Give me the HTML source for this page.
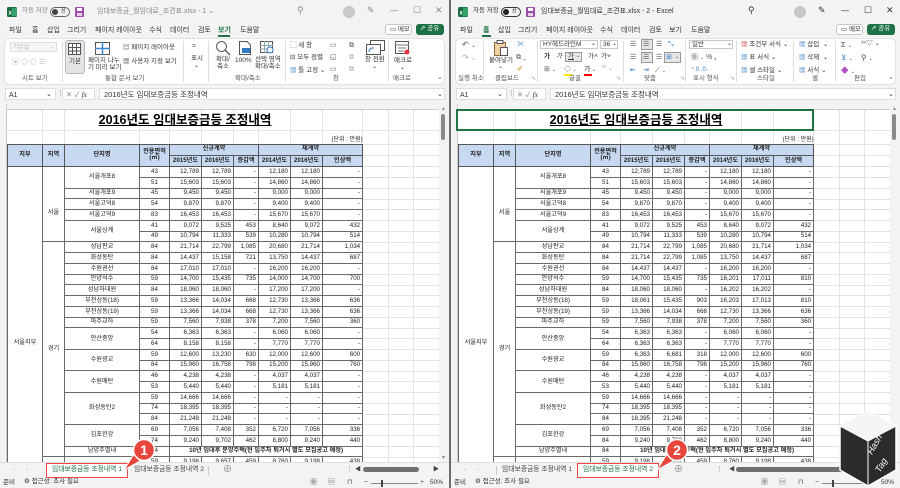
<!DOCTYPE html>
<html><head><meta charset="utf-8">
<style>
*{box-sizing:border-box}
body{margin:0;width:900px;height:488px;position:relative;overflow:hidden;background:#6b6b6b;font-family:"Liberation Sans","Noto Sans CJK KR",sans-serif}
.win{position:absolute;top:0;width:449px;height:488px;background:#f3f3f3;overflow:hidden}
.t{position:absolute;white-space:nowrap;font-size:7px;color:#333;line-height:1}
.g{color:#888}
.lab{position:absolute;white-space:nowrap;font-size:6.5px;color:#555;line-height:1;top:76px}
.sep{position:absolute;top:41px;width:1px;height:41px;background:#dedede}
.rib{position:absolute;left:4px;top:38px;width:441px;height:47px;background:#fff;border:1px solid #e2e2e2;border-radius:6px}
.box{position:absolute;border:1px solid #c8c8c8;background:#fff}
.sheet{position:absolute;left:0;top:104px;width:439px;height:359px;background:#fff;overflow:hidden}
table{position:absolute;left:7px;top:6px;border-collapse:collapse;table-layout:fixed;width:355px}
td,th{padding:0;font-size:6.2px;line-height:1;overflow:hidden;white-space:nowrap;color:#222}
.d td{border:1px solid #6a6a6a;background:#fff;text-align:right;padding-right:2px}
.d td.c{text-align:center;padding:0}
.h th{border:1px solid #555;background:#c6d9f1;font-weight:bold;font-size:6.2px}
.title{text-align:center;font-size:12.5px;font-weight:bold;text-decoration:underline;color:#000;vertical-align:middle}
.unit{text-align:right;font-size:6px;vertical-align:bottom;padding-bottom:1px!important}
.d{height:10.75px}
.vs{position:absolute;left:439px;top:104px;width:9px;height:359px;background:#f3f3f3}
.tabs{position:absolute;left:0;top:462px;width:449px;height:16px;background:#f3f3f3;border-top:1px solid #ddd}
.stat{position:absolute;left:0;top:478px;width:449px;height:10px;background:#f3f3f3}
</style></head><body>

<!-- LEFT WINDOW -->
<div class="win" style="left:0">
  <svg style="position:absolute;left:7px;top:7px" width="10" height="10"><rect width="10" height="10" rx="1.5" fill="#1d6f42"/><rect x="5" y="1" width="5" height="8" fill="#33a36b"/><text x="1.5" y="7.5" font-size="6" fill="#fff" font-family="Liberation Sans" font-weight="bold">x</text></svg>
  <span class="t g" style="left:22px;top:8px;font-size:6.5px">자동 저장</span>
  <div style="position:absolute;left:50px;top:7px;width:20px;height:10px;border:1px solid #666;border-radius:5px"><div style="position:absolute;left:1px;top:1px;width:6px;height:6px;border-radius:3px;background:#444"></div><span class="t" style="left:10px;top:1px;font-size:5px">끔</span></div>
  <svg style="position:absolute;left:75px;top:7px" width="9" height="10"><rect width="9" height="10" rx="1" fill="#9b4fa8"/><rect x="2" y="1" width="5" height="3" fill="#fff"/><rect x="2" y="6" width="5" height="3" fill="#e8cde9"/></svg>
  <span class="t g" style="left:97px;top:8px">임대보증금_월임대료_조견표.xlsx - 1 ⌄</span>
  <span class="t g" style="left:297px;top:6px;font-size:9px">⚲</span>
  <div style="position:absolute;left:343px;top:6px;width:12px;height:12px;border-radius:6px;background:#c8c8c8"></div>
  <span class="t g" style="left:367px;top:6px;font-size:9px">✎</span>
  <span class="t g" style="left:390px;top:7px;font-size:8px">—</span>
  <span class="t g" style="left:413px;top:6px;font-size:9px">☐</span>
  <span class="t g" style="left:435px;top:6px;font-size:9px">✕</span>

  <span class="t" style="left:9px;top:27px">파일</span><span class="t" style="left:32px;top:27px">홈</span><span class="t" style="left:47px;top:27px">삽입</span><span class="t" style="left:67px;top:27px">그리기</span><span class="t" style="left:95px;top:27px">페이지 레이아웃</span><span class="t" style="left:149px;top:27px">수식</span><span class="t" style="left:170px;top:27px">데이터</span><span class="t" style="left:198px;top:27px">검토</span><span class="t" style="left:218px;top:27px;color:#1e7145;font-weight:bold">보기</span><span class="t" style="left:240px;top:27px">도움말</span>
  <div style="position:absolute;left:218px;top:35px;width:12px;height:2px;background:#1e7145"></div>
  <div class="box" style="left:385px;top:24px;width:27px;height:11px;border-radius:3px"><span class="t" style="left:4px;top:2px;font-size:6.5px">▭ 메모</span></div>
  <div style="position:absolute;left:416px;top:24px;width:28px;height:11px;border-radius:3px;background:#1e7145"><span class="t" style="left:4px;top:2px;font-size:6.5px;color:#fff">⇗ 공유</span></div>

  <div class="rib"></div>
  <div class="box" style="left:10px;top:42px;width:47px;height:10px;background:#f6f6f6;border-color:#e0e0e0"><span class="t" style="left:2px;top:2px;color:#bbb;font-size:6px">기본값</span><span class="t" style="left:39px;top:1px;color:#bbb;font-size:6px">⌄</span></div>
  <span class="t" style="left:12px;top:59px;color:#bbb;font-size:7px">▣ ◎ ◎ ☰</span>
  <span class="lab" style="left:22px">시트 보기</span>
  <div class="sep" style="left:62px"></div>
  <div style="position:absolute;left:65px;top:40px;width:20px;height:34px;background:#e4e4e4;border:1px solid #b8b8b8;border-radius:3px"></div>
  <svg style="position:absolute;left:68px;top:43px" width="13" height="12"><rect x=".5" y=".5" width="12" height="11" fill="#fff" stroke="#555"/><path d="M4.5 0V12M8.5 0V12M0 4.5H13M0 8H13" stroke="#555"/></svg>
  <span class="t" style="left:69px;top:59px;font-size:6.5px">기본</span>
  <svg style="position:absolute;left:95px;top:42px" width="15" height="13"><rect x=".5" y=".5" width="14" height="12" fill="#fff" stroke="#555"/><path d="M7.5 0V13M0 6.5H15" stroke="#3b86d6" stroke-width="1.5"/></svg>
  <span class="t" style="left:88px;top:58px;font-size:6.5px">페이지 나누</span><span class="t" style="left:88px;top:65px;font-size:6.5px">기 미리 보기</span>
  <span class="t" style="left:123px;top:45px;font-size:6.5px">▤ 페이지 레이아웃</span>
  <span class="t" style="left:123px;top:59px;font-size:6.5px">▦ 사용자 지정 보기</span>
  <span class="lab" style="left:105px">통합 문서 보기</span>
  <div class="sep" style="left:183px"></div>
  <span class="t" style="left:192px;top:43px;font-size:7px;color:#666">⌗</span>
  <span class="t" style="left:191px;top:56px;font-size:6.5px">표시</span><span class="t" style="left:194px;top:63px;font-size:6px">⌄</span>
  <div class="sep" style="left:208px"></div>
  <svg style="position:absolute;left:215px;top:40px" width="16" height="16"><circle cx="6.5" cy="6.5" r="5" fill="none" stroke="#555"/><path d="M10 10L15 15" stroke="#555" stroke-width="1.3"/></svg>
  <span class="t" style="left:216px;top:57px;font-size:6.5px">확대/</span><span class="t" style="left:217px;top:64px;font-size:6.5px">축소</span>
  <svg style="position:absolute;left:239px;top:41px" width="12" height="14"><path d="M.5 .5H8L11.5 4V13.5H.5Z" fill="#fff" stroke="#555"/><rect x="3" y="7" width="8" height="5" fill="#2f78c4"/></svg>
  <span class="t" style="left:235px;top:58px;font-size:6.5px">100%</span>
  <svg style="position:absolute;left:260px;top:41px" width="15" height="14"><rect x=".5" y=".5" width="12" height="11" fill="#fff" stroke="#555"/><path d="M4.5 0V12M8.5 0V12M0 4.5H13M0 8H13" stroke="#8aa"/><circle cx="10" cy="9" r="3" fill="#fff" stroke="#2f78c4"/></svg>
  <span class="t" style="left:255px;top:57px;font-size:6.5px">선택 영역</span><span class="t" style="left:255px;top:64px;font-size:6.5px">확대/축소</span>
  <span class="lab" style="left:235px">확대/축소</span>
  <div class="sep" style="left:285px"></div>
  <span class="t" style="left:290px;top:43px;font-size:6.5px">⬚ 새 창</span>
  <span class="t" style="left:290px;top:55px;font-size:6.5px">⊟ 모두 정렬</span>
  <span class="t" style="left:290px;top:68px;font-size:6.5px"><span style="color:#2f78c4">▦</span> 틀 고정 ⌄</span>
  <span class="t" style="left:330px;top:42px;font-size:7px;color:#555">▭</span><span class="t" style="left:330px;top:54px;font-size:7px;color:#555">◱</span><span class="t" style="left:330px;top:66px;font-size:7px;color:#555">▭</span>
  <span class="t" style="left:349px;top:42px;font-size:7px;color:#555">⧉</span><span class="t" style="left:349px;top:54px;font-size:7px;color:#aaa">⧉</span><span class="t" style="left:349px;top:66px;font-size:7px;color:#aaa">⧉</span>
  <svg style="position:absolute;left:366px;top:40px" width="20" height="16"><rect x="4.5" y=".5" width="14" height="10" fill="#fff" stroke="#555"/><rect x=".5" y="4.5" width="14" height="10" fill="#fff" stroke="#555"/><path d="M3 12A4 4 0 0 1 8 8" stroke="#2f78c4" fill="none"/></svg>
  <span class="t" style="left:365px;top:57px;font-size:6.5px">창 전환</span><span class="t" style="left:372px;top:64px;font-size:6px">⌄</span>
  <span class="lab" style="left:333px">창</span>
  <div class="sep" style="left:388px"></div>
  <svg style="position:absolute;left:395px;top:41px" width="15" height="14"><rect x=".5" y=".5" width="13" height="12" fill="#fff" stroke="#555"/><path d="M0 4H14M3 7H11M3 10H9" stroke="#777"/><circle cx="12" cy="11" r="2.5" fill="#e34"/></svg>
  <span class="t" style="left:394px;top:58px;font-size:6.5px">매크로</span><span class="t" style="left:400px;top:65px;font-size:6px">⌄</span>
  <span class="lab" style="left:393px">매크로</span>
  <span class="t" style="left:437px;top:74px;font-size:7px;color:#555">⌄</span>

  <div class="box" style="left:5px;top:88px;width:51px;height:12px;border-color:#ddd"><span class="t" style="left:3px;top:3px">A1</span><span class="t" style="left:40px;top:2px">⌄</span></div>
  <span class="t g" style="left:57px;top:90px">⋮</span>
  <div class="box" style="left:62px;top:88px;width:33px;height:12px;border-color:#ddd"><span class="t g" style="left:3px;top:2px;font-size:7.5px">✕ ✓ <i style="color:#333;font-family:'Liberation Serif'">fx</i></span></div>
  <div class="box" style="left:99px;top:88px;width:346px;height:12px;border-color:#ddd"><span class="t" style="left:4px;top:2px;font-size:7.5px">2016년도 임대보증금등 조정내역</span><span class="t" style="left:337px;top:2px">⌄</span></div>

  <div class="sheet">
    <div style="position:absolute;left:0;top:0;width:439px;height:6px;background:#f3f3f3;border-bottom:1px solid #ccc"></div>
    <div style="position:absolute;left:0;top:0;width:7px;height:359px;background:#f3f3f3;border-right:1px solid #ccc"></div>
    <svg style="position:absolute;left:0;top:0" width="439" height="359"><path stroke="#e3e3e3" d="M42.5 6V359M64.5 6V359M139.5 6V359M169.5 6V359M201.5 6V359M233.5 6V359M258.5 6V359M290.5 6V359M322.5 6V359M362.5 6V359M388.5 6V359M413.5 6V359M7 26.5H439M7 40.5H439M7 51.5H439M7 62.5H439M7 73.5H439M7 84.5H439M7 95.5H439M7 105.5H439M7 116.5H439M7 127.5H439M7 138.5H439M7 148.5H439M7 159.5H439M7 170.5H439M7 181.5H439M7 191.5H439M7 202.5H439M7 213.5H439M7 224.5H439M7 234.5H439M7 245.5H439M7 256.5H439M7 267.5H439M7 277.5H439M7 288.5H439M7 299.5H439M7 310.5H439M7 320.5H439M7 331.5H439M7 342.5H439M7 353.5H439"/></svg>
    <table>
      <colgroup><col style="width:35px"><col style="width:22px"><col style="width:75px"><col style="width:30px"><col style="width:32px"><col style="width:32px"><col style="width:25px"><col style="width:32px"><col style="width:32px"><col style="width:40px"></colgroup>
      <tr style="height:20px"><td colspan="10" class="title">2016년도 임대보증금등 조정내역</td></tr>
      <tr style="height:14px"><td colspan="10" class="unit">(단위 : 만원)</td></tr>
      <tr class="h" style="height:11px"><th rowspan="2">지부</th><th rowspan="2">지역</th><th rowspan="2">단지명</th><th rowspan="2">전용면적<br>(㎡)</th><th colspan="3">신규계약</th><th colspan="3">재계약</th></tr>
      <tr class="h" style="height:11.7px"><th>2015년도</th><th>2016년도</th><th>증감액</th><th>2014년도</th><th>2016년도</th><th>인상액</th></tr>
      <tr class="d"><td rowspan="28" class="c" style="vertical-align:top;padding-top:173px">서울지부</td><td rowspan="7" class="c" style="vertical-align:top;padding-top:43px">서울</td><td rowspan="2" class="c">서울개포8</td><td class="c">43</td><td>12,789</td><td>12,789</td><td>-</td><td>12,180</td><td>12,180</td><td>-</td></tr>
      <tr class="d"><td class="c">51</td><td>15,603</td><td>15,603</td><td>-</td><td>14,860</td><td>14,860</td><td>-</td></tr>
      <tr class="d"><td class="c">서울개포9</td><td class="c">45</td><td>9,450</td><td>9,450</td><td>-</td><td>9,000</td><td>9,000</td><td>-</td></tr>
      <tr class="d"><td class="c">서울고덕8</td><td class="c">54</td><td>9,870</td><td>9,870</td><td>-</td><td>9,400</td><td>9,400</td><td>-</td></tr>
      <tr class="d"><td class="c">서울고덕9</td><td class="c">83</td><td>16,453</td><td>16,453</td><td>-</td><td>15,670</td><td>15,670</td><td>-</td></tr>
      <tr class="d"><td rowspan="2" class="c">서울상계</td><td class="c">41</td><td>9,072</td><td>9,525</td><td>453</td><td>8,640</td><td>9,072</td><td>432</td></tr>
      <tr class="d"><td class="c">49</td><td>10,794</td><td>11,333</td><td>539</td><td>10,280</td><td>10,794</td><td>514</td></tr>
      <tr class="d"><td rowspan="20" class="c">경기</td><td class="c">성남판교</td><td class="c">84</td><td>21,714</td><td>22,799</td><td>1,085</td><td>20,680</td><td>21,714</td><td>1,034</td></tr>
      <tr class="d"><td class="c">화성동탄</td><td class="c">84</td><td>14,437</td><td>15,158</td><td>721</td><td>13,750</td><td>14,437</td><td>687</td></tr>
      <tr class="d"><td class="c">수원권선</td><td class="c">84</td><td>17,010</td><td>17,010</td><td>-</td><td>16,200</td><td>16,200</td><td>-</td></tr>
      <tr class="d"><td class="c">안양석수</td><td class="c">59</td><td>14,700</td><td>15,435</td><td>735</td><td>14,000</td><td>14,700</td><td>700</td></tr>
      <tr class="d"><td class="c">성남하대원</td><td class="c">84</td><td>18,060</td><td>18,060</td><td>-</td><td>17,200</td><td>17,200</td><td>-</td></tr>
      <tr class="d"><td class="c">부천상동(18)</td><td class="c">59</td><td>13,366</td><td>14,034</td><td>668</td><td>12,730</td><td>13,366</td><td>636</td></tr>
      <tr class="d"><td class="c">부천상동(19)</td><td class="c">59</td><td>13,366</td><td>14,034</td><td>668</td><td>12,730</td><td>13,366</td><td>636</td></tr>
      <tr class="d"><td class="c">파주교하</td><td class="c">59</td><td>7,560</td><td>7,938</td><td>378</td><td>7,200</td><td>7,560</td><td>360</td></tr>
      <tr class="d"><td rowspan="2" class="c">안산중앙</td><td class="c">54</td><td>6,363</td><td>6,363</td><td>-</td><td>6,060</td><td>6,060</td><td>-</td></tr>
      <tr class="d"><td class="c">64</td><td>8,158</td><td>8,158</td><td>-</td><td>7,770</td><td>7,770</td><td>-</td></tr>
      <tr class="d"><td rowspan="2" class="c">수원광교</td><td class="c">59</td><td>12,600</td><td>13,230</td><td>630</td><td>12,000</td><td>12,600</td><td>600</td></tr>
      <tr class="d"><td class="c">84</td><td>15,960</td><td>16,758</td><td>798</td><td>15,200</td><td>15,960</td><td>760</td></tr>
      <tr class="d"><td rowspan="2" class="c">수원매탄</td><td class="c">46</td><td>4,238</td><td>4,238</td><td>-</td><td>4,037</td><td>4,037</td><td>-</td></tr>
      <tr class="d"><td class="c">53</td><td>5,440</td><td>5,440</td><td>-</td><td>5,181</td><td>5,181</td><td>-</td></tr>
      <tr class="d"><td rowspan="3" class="c">화성동탄2</td><td class="c">59</td><td>14,666</td><td>14,666</td><td>-</td><td>-</td><td>-</td><td>-</td></tr>
      <tr class="d"><td class="c">74</td><td>18,395</td><td>18,395</td><td>-</td><td>-</td><td>-</td><td>-</td></tr>
      <tr class="d"><td class="c">84</td><td>21,248</td><td>21,248</td><td>-</td><td>-</td><td>-</td><td>-</td></tr>
      <tr class="d"><td rowspan="2" class="c">김포한강</td><td class="c">69</td><td>7,056</td><td>7,408</td><td>352</td><td>6,720</td><td>7,056</td><td>336</td></tr>
      <tr class="d"><td class="c">74</td><td>9,240</td><td>9,702</td><td>462</td><td>8,800</td><td>9,240</td><td>440</td></tr>
      <tr class="d"><td class="c">남양주별내</td><td class="c">84</td><td colspan="6" class="c" style="font-weight:bold">10년 임대후 분양주택(현 입주자 퇴거시 별도 모집공고 예정)</td></tr>
      <tr class="d"><td class="c"></td><td class="c"></td><td class="c">59</td><td>9,198</td><td>9,657</td><td>459</td><td>8,760</td><td>9,198</td><td>438</td></tr>
    </table>
  </div>
  <div class="vs"><span class="t g" style="left:2px;top:3px;font-size:5px">▲</span><div style="position:absolute;left:2px;top:10px;width:4px;height:26px;border-radius:2px;background:#8a8a8a"></div><span class="t g" style="left:2px;top:352px;font-size:5px">▼</span></div>

  <div class="tabs">
    <span class="t" style="left:13px;top:4px;color:#bbb;font-size:6px">‹</span><span class="t" style="left:26px;top:4px;color:#bbb;font-size:6px">›</span>
    <div style="position:absolute;left:46px;top:0;width:82px;height:15px;background:#fff;border:1.5px solid #f04848"></div>
    <span class="t" style="left:52px;top:4px;color:#1e7145;font-size:6.8px">임대보증금등 조정내역 1</span>
    <span class="t" style="left:134px;top:4px;color:#444;font-size:6.8px">임대보증금등 조정내역 2</span>
    <div style="position:absolute;left:208px;top:3px;width:1px;height:9px;background:#ccc"></div>
    <span class="t g" style="left:223px;top:2px;font-size:9px">⊕</span>
    <span class="t g" style="left:346px;top:3px">⋮</span>
    <span class="t" style="left:355px;top:4px;font-size:6px;color:#444">◀</span>
    <div style="position:absolute;left:363px;top:4px;width:56px;height:5px;border-radius:3px;background:#6f6f6f"></div>
    <span class="t" style="left:433px;top:4px;font-size:6px;color:#444">▶</span>
  </div>
  <div class="stat">
    <span class="t" style="left:3px;top:2px;font-size:6.5px">준비</span>
    <span class="t" style="left:24px;top:1px;font-size:6.5px">⚙ 접근성: 조사 필요</span>
    <span class="t" style="left:310px;top:1px;font-size:7px;color:#555">▦</span><span class="t" style="left:328px;top:1px;font-size:7px;color:#555">▤</span><span class="t" style="left:347px;top:1px;font-size:7px;color:#555">⊓</span>
    <span class="t" style="left:364px;top:1px;font-size:7px;color:#555">−</span>
    <div style="position:absolute;left:371px;top:5px;width:47px;height:1px;background:#888"></div>
    <div style="position:absolute;left:381px;top:2px;width:2px;height:7px;background:#444"></div>
    <span class="t" style="left:420px;top:1px;font-size:7px;color:#555">+</span>
    <span class="t" style="left:430px;top:2px;font-size:6.5px">50%</span>
  </div>
</div>

<!-- RIGHT WINDOW -->
<div class="win" style="left:451px">
  <svg style="position:absolute;left:7px;top:7px" width="10" height="10"><rect width="10" height="10" rx="1.5" fill="#1d6f42"/><rect x="5" y="1" width="5" height="8" fill="#33a36b"/><text x="1.5" y="7.5" font-size="6" fill="#fff" font-family="Liberation Sans" font-weight="bold">x</text></svg>
  <span class="t" style="left:22px;top:8px;font-size:6.5px">자동 저장</span>
  <div style="position:absolute;left:50px;top:7px;width:20px;height:10px;border:1px solid #333;border-radius:5px"><div style="position:absolute;left:1px;top:1px;width:6px;height:6px;border-radius:3px;background:#222"></div><span class="t" style="left:10px;top:1px;font-size:5px">끔</span></div>
  <svg style="position:absolute;left:75px;top:7px" width="9" height="10"><rect width="9" height="10" rx="1" fill="#9b4fa8"/><rect x="2" y="1" width="5" height="3" fill="#fff"/><rect x="2" y="6" width="5" height="3" fill="#e8cde9"/></svg>
  <span class="t" style="left:90px;top:8px">임대보증금_월임대료_조견표.xlsx - 2 - Excel</span>
  <span class="t" style="left:297px;top:6px;font-size:9px">⚲</span>
  <div style="position:absolute;left:343px;top:6px;width:12px;height:12px;border-radius:6px;background:#c8c8c8"></div>
  <span class="t" style="left:367px;top:6px;font-size:9px">✎</span>
  <span class="t" style="left:390px;top:7px;font-size:8px">—</span>
  <span class="t" style="left:413px;top:6px;font-size:9px">☐</span>
  <span class="t" style="left:435px;top:6px;font-size:9px">✕</span>

  <span class="t" style="left:9px;top:27px">파일</span><span class="t" style="left:32px;top:27px;color:#1e7145;font-weight:bold">홈</span><span class="t" style="left:47px;top:27px">삽입</span><span class="t" style="left:67px;top:27px">그리기</span><span class="t" style="left:95px;top:27px">페이지 레이아웃</span><span class="t" style="left:149px;top:27px">수식</span><span class="t" style="left:170px;top:27px">데이터</span><span class="t" style="left:198px;top:27px">검토</span><span class="t" style="left:218px;top:27px">보기</span><span class="t" style="left:240px;top:27px">도움말</span>
  <div style="position:absolute;left:31px;top:35px;width:9px;height:2px;background:#1e7145"></div>
  <div class="box" style="left:385px;top:24px;width:27px;height:11px;border-radius:3px"><span class="t" style="left:4px;top:2px;font-size:6.5px">▭ 메모</span></div>
  <div style="position:absolute;left:416px;top:24px;width:28px;height:11px;border-radius:3px;background:#1e7145"><span class="t" style="left:4px;top:2px;font-size:6.5px;color:#fff">⇗ 공유</span></div>

  <div class="rib"></div>
  <span class="t" style="left:11px;top:41px;font-size:8px;color:#555">↶ <span style="font-size:6px">⌄</span></span>
  <span class="t" style="left:11px;top:54px;font-size:8px;color:#aaa">↷ <span style="font-size:6px">⌄</span></span>
  <span class="lab" style="left:7px">실행 취소</span>
  <div class="sep" style="left:32px"></div>
  <svg style="position:absolute;left:43px;top:40px" width="14" height="16"><rect x=".5" y="2.5" width="11" height="13" fill="#f1d3a6" stroke="#8a6a3a"/><rect x="3" y=".5" width="6" height="3" fill="#fff" stroke="#555"/><rect x="6.5" y="7.5" width="7" height="8" fill="#fff" stroke="#555"/></svg>
  <span class="t" style="left:38px;top:58px;font-size:6.5px">붙여넣기</span><span class="t" style="left:47px;top:64px;font-size:6px">⌄</span>
  <span class="t" style="left:66px;top:41px;font-size:7px;color:#2f78c4">✂</span><span class="t" style="left:65px;top:54px;font-size:7px;color:#555">⧉ ⌄</span><span class="t" style="left:66px;top:66px;font-size:7px;color:#c8862a">✐</span>
  <span class="lab" style="left:44px">클립보드</span><span class="t" style="left:80px;top:77px;font-size:5px;color:#777">↘</span>
  <div class="sep" style="left:86px"></div>
  <div class="box" style="left:89px;top:40px;width:58px;height:9px"><span class="t" style="left:2px;top:1px;font-size:6.5px">HY헤드라인M</span><span class="t" style="left:50px;top:0;font-size:6px">⌄</span></div>
  <div class="box" style="left:149px;top:40px;width:18px;height:9px"><span class="t" style="left:2px;top:1px;font-size:6.5px">36</span><span class="t" style="left:11px;top:0;font-size:6px">⌄</span></div>
  <span class="t" style="left:93px;top:54px;font-size:6.5px;font-weight:bold">가</span><span class="t" style="left:105px;top:54px;font-size:6.5px;font-style:italic">가</span>
  <div class="box" style="left:114px;top:52px;width:17px;height:10px;background:#e6e6e6;border-color:#999"><span class="t" style="left:2px;top:1px;font-size:6.5px;text-decoration:underline">가</span><span class="t" style="left:10px;top:1px;font-size:5px">⌄</span></div>
  <span class="t" style="left:137px;top:54px;font-size:6.5px">가˄</span><span class="t" style="left:150px;top:54px;font-size:6.5px">가˅</span>
  <span class="t" style="left:93px;top:66px;font-size:7px;color:#555">⊞ <span style="font-size:5px">⌄</span></span>
  <span class="t" style="left:113px;top:66px;font-size:7px;color:#555">◇<span style="font-size:5px"> ⌄</span></span><div style="position:absolute;left:113px;top:74px;width:8px;height:2px;background:#ffe600"></div>
  <span class="t" style="left:133px;top:66px;font-size:7px">가<span style="font-size:5px"> ⌄</span></span><div style="position:absolute;left:133px;top:74px;width:8px;height:2px;background:#e00"></div>
  <span class="t" style="left:150px;top:66px;font-size:6px;color:#aaa">ᄇ ⌄</span>
  <span class="lab" style="left:118px">글꼴</span><span class="t" style="left:165px;top:77px;font-size:5px;color:#777">↘</span>
  <div class="sep" style="left:172px"></div>
  <span class="t" style="left:179px;top:41px;font-size:7px;color:#555">☰</span>
  <div class="box" style="left:190px;top:39px;width:12px;height:11px;background:#e6e6e6;border-color:#999"></div><span class="t" style="left:192px;top:41px;font-size:7px;color:#555">☰</span>
  <span class="t" style="left:205px;top:41px;font-size:7px;color:#555">☰</span><span class="t" style="left:217px;top:41px;font-size:7px;color:#2f78c4">⤡</span>
  <span class="t" style="left:179px;top:54px;font-size:7px;color:#555">☰</span>
  <div class="box" style="left:190px;top:52px;width:12px;height:11px;background:#e6e6e6;border-color:#999"></div><span class="t" style="left:192px;top:54px;font-size:7px;color:#555">☰</span>
  <span class="t" style="left:205px;top:54px;font-size:7px;color:#555">☰</span>
  <div class="box" style="left:213px;top:52px;width:17px;height:11px;background:#e6e6e6;border-color:#999"><span class="t" style="left:1px;top:1px;font-size:7px;color:#2f78c4">⊞</span><span class="t" style="left:10px;top:2px;font-size:5px">⌄</span></div>
  <span class="t" style="left:179px;top:67px;font-size:7px;color:#2f78c4">⇤</span><span class="t" style="left:192px;top:67px;font-size:7px;color:#2f78c4">⇥</span><span class="t" style="left:204px;top:67px;font-size:7px;color:#555">⟋ <span style="font-size:5px">⌄</span></span>
  <span class="lab" style="left:193px">맞춤</span><span class="t" style="left:229px;top:77px;font-size:5px;color:#777">↘</span>
  <div class="sep" style="left:234px"></div>
  <div class="box" style="left:238px;top:40px;width:44px;height:9px"><span class="t" style="left:2px;top:1px;font-size:6.5px">일반</span><span class="t" style="left:37px;top:0;font-size:6px">⌄</span></div>
  <span class="t" style="left:240px;top:54px;font-size:7px;color:#555">▦ <span style="font-size:5px">⌄</span> % <b>,</b></span>
  <span class="t" style="left:240px;top:67px;font-size:6px;color:#2f78c4">⁺.0 .0₋</span>
  <span class="lab" style="left:242px">표시 형식</span><span class="t" style="left:279px;top:77px;font-size:5px;color:#777">↘</span>
  <div class="sep" style="left:285px"></div>
  <span class="t" style="left:290px;top:42px;font-size:6.5px"><span style="color:#c33">▦</span> 조건부 서식 ⌄</span>
  <span class="t" style="left:290px;top:55px;font-size:6.5px"><span style="color:#2f78c4">▦</span> 표 서식 ⌄</span>
  <span class="t" style="left:290px;top:68px;font-size:6.5px"><span style="color:#2f78c4">▦</span> 셀 스타일 ⌄</span>
  <span class="lab" style="left:306px">스타일</span>
  <div class="sep" style="left:342px"></div>
  <span class="t" style="left:348px;top:42px;font-size:6.5px"><span style="color:#2f78c4">▦</span> 삽입 &nbsp;⌄</span>
  <span class="t" style="left:348px;top:55px;font-size:6.5px"><span style="color:#2f78c4">▦</span> 삭제 &nbsp;⌄</span>
  <span class="t" style="left:348px;top:68px;font-size:6.5px"><span style="color:#2f78c4">▦</span> 서식 ⌄</span>
  <span class="lab" style="left:361px">셀</span>
  <div class="sep" style="left:384px"></div>
  <span class="t" style="left:390px;top:41px;font-size:7.5px;color:#444">Σ <span style="font-size:5px">⌄</span></span>
  <span class="t" style="left:390px;top:54px;font-size:7.5px;color:#2f78c4">⊻ <span style="font-size:5px;color:#444">⌄</span></span>
  <span class="t" style="left:390px;top:67px;font-size:7.5px;color:#b04fc0">◆ <span style="font-size:5px;color:#444">⌄</span></span>
  <span class="t" style="left:410px;top:41px;font-size:6.5px;color:#444">ᴬᶻ▽ ⌄</span>
  <span class="t" style="left:410px;top:54px;font-size:7.5px;color:#444">⚲ <span style="font-size:5px">⌄</span></span>
  <span class="lab" style="left:403px">편집</span>
  <span class="t" style="left:437px;top:74px;font-size:7px;color:#555">⌄</span>

  <div class="box" style="left:5px;top:88px;width:51px;height:12px;border-color:#ddd"><span class="t" style="left:3px;top:3px">A1</span><span class="t" style="left:40px;top:2px">⌄</span></div>
  <span class="t g" style="left:57px;top:90px">⋮</span>
  <div class="box" style="left:62px;top:88px;width:33px;height:12px;border-color:#ddd"><span class="t g" style="left:3px;top:2px;font-size:7.5px">✕ ✓ <i style="color:#333;font-family:'Liberation Serif'">fx</i></span></div>
  <div class="box" style="left:99px;top:88px;width:346px;height:12px;border-color:#ddd"><span class="t" style="left:4px;top:2px;font-size:7.5px">2016년도 임대보증금등 조정내역</span><span class="t" style="left:337px;top:2px">⌄</span></div>

  <div class="sheet">
    <div style="position:absolute;left:0;top:0;width:439px;height:6px;background:#f3f3f3;border-bottom:1px solid #ccc"></div>
    <div style="position:absolute;left:0;top:0;width:7px;height:359px;background:#f3f3f3;border-right:1px solid #ccc"></div>
    <svg style="position:absolute;left:0;top:0" width="439" height="359"><path stroke="#e3e3e3" d="M42.5 6V359M64.5 6V359M139.5 6V359M169.5 6V359M201.5 6V359M233.5 6V359M258.5 6V359M290.5 6V359M322.5 6V359M362.5 6V359M388.5 6V359M413.5 6V359M7 26.5H439M7 40.5H439M7 51.5H439M7 62.5H439M7 73.5H439M7 84.5H439M7 95.5H439M7 105.5H439M7 116.5H439M7 127.5H439M7 138.5H439M7 148.5H439M7 159.5H439M7 170.5H439M7 181.5H439M7 191.5H439M7 202.5H439M7 213.5H439M7 224.5H439M7 234.5H439M7 245.5H439M7 256.5H439M7 267.5H439M7 277.5H439M7 288.5H439M7 299.5H439M7 310.5H439M7 320.5H439M7 331.5H439M7 342.5H439M7 353.5H439"/></svg>
    <table>
      <colgroup><col style="width:35px"><col style="width:22px"><col style="width:75px"><col style="width:30px"><col style="width:32px"><col style="width:32px"><col style="width:25px"><col style="width:32px"><col style="width:32px"><col style="width:40px"></colgroup>
      <tr style="height:20px"><td colspan="10" class="title">2016년도 임대보증금등 조정내역</td></tr>
      <tr style="height:14px"><td colspan="10" class="unit">(단위 : 만원)</td></tr>
      <tr class="h" style="height:11px"><th rowspan="2">지부</th><th rowspan="2">지역</th><th rowspan="2">단지명</th><th rowspan="2">전용면적<br>(㎡)</th><th colspan="3">신규계약</th><th colspan="3">재계약</th></tr>
      <tr class="h" style="height:11.7px"><th>2015년도</th><th>2016년도</th><th>증감액</th><th>2014년도</th><th>2016년도</th><th>인상액</th></tr>
      <tr class="d"><td rowspan="28" class="c" style="vertical-align:top;padding-top:173px">서울지부</td><td rowspan="7" class="c" style="vertical-align:top;padding-top:43px">서울</td><td rowspan="2" class="c">서울개포8</td><td class="c">43</td><td>12,789</td><td>12,789</td><td>-</td><td>12,180</td><td>12,180</td><td>-</td></tr>
      <tr class="d"><td class="c">51</td><td>15,603</td><td>15,603</td><td>-</td><td>14,860</td><td>14,860</td><td>-</td></tr>
      <tr class="d"><td class="c">서울개포9</td><td class="c">45</td><td>9,450</td><td>9,450</td><td>-</td><td>9,000</td><td>9,000</td><td>-</td></tr>
      <tr class="d"><td class="c">서울고덕8</td><td class="c">54</td><td>9,870</td><td>9,870</td><td>-</td><td>9,400</td><td>9,400</td><td>-</td></tr>
      <tr class="d"><td class="c">서울고덕9</td><td class="c">83</td><td>16,453</td><td>16,453</td><td>-</td><td>15,670</td><td>15,670</td><td>-</td></tr>
      <tr class="d"><td rowspan="2" class="c">서울상계</td><td class="c">41</td><td>9,072</td><td>9,525</td><td>453</td><td>8,640</td><td>9,072</td><td>432</td></tr>
      <tr class="d"><td class="c">49</td><td>10,794</td><td>11,333</td><td>539</td><td>10,280</td><td>10,794</td><td>514</td></tr>
      <tr class="d"><td rowspan="20" class="c">경기</td><td class="c">성남판교</td><td class="c">84</td><td>21,714</td><td>22,799</td><td>1,085</td><td>20,680</td><td>21,714</td><td>1,034</td></tr>
      <tr class="d"><td class="c">화성동탄</td><td class="c">84</td><td>21,714</td><td>22,799</td><td>1,085</td><td>13,750</td><td>14,437</td><td>687</td></tr>
      <tr class="d"><td class="c">수원권선</td><td class="c">84</td><td>14,437</td><td>14,437</td><td>-</td><td>16,200</td><td>16,200</td><td>-</td></tr>
      <tr class="d"><td class="c">안양석수</td><td class="c">59</td><td>14,700</td><td>15,435</td><td>735</td><td>16,201</td><td>17,011</td><td>810</td></tr>
      <tr class="d"><td class="c">성남하대원</td><td class="c">84</td><td>18,060</td><td>18,060</td><td>-</td><td>16,202</td><td>16,202</td><td>-</td></tr>
      <tr class="d"><td class="c">부천상동(18)</td><td class="c">59</td><td>18,061</td><td>15,435</td><td>903</td><td>16,203</td><td>17,013</td><td>810</td></tr>
      <tr class="d"><td class="c">부천상동(19)</td><td class="c">59</td><td>13,366</td><td>14,034</td><td>668</td><td>12,730</td><td>13,366</td><td>636</td></tr>
      <tr class="d"><td class="c">파주교하</td><td class="c">59</td><td>7,560</td><td>7,938</td><td>378</td><td>7,200</td><td>7,560</td><td>360</td></tr>
      <tr class="d"><td rowspan="2" class="c">안산중앙</td><td class="c">54</td><td>6,363</td><td>6,363</td><td>-</td><td>6,060</td><td>6,060</td><td>-</td></tr>
      <tr class="d"><td class="c">64</td><td>6,363</td><td>6,363</td><td>-</td><td>7,770</td><td>7,770</td><td>-</td></tr>
      <tr class="d"><td rowspan="2" class="c">수원광교</td><td class="c">59</td><td>6,363</td><td>6,681</td><td>318</td><td>12,000</td><td>12,600</td><td>600</td></tr>
      <tr class="d"><td class="c">84</td><td>15,960</td><td>16,758</td><td>798</td><td>15,200</td><td>15,960</td><td>760</td></tr>
      <tr class="d"><td rowspan="2" class="c">수원매탄</td><td class="c">46</td><td>4,238</td><td>4,238</td><td>-</td><td>4,037</td><td>4,037</td><td>-</td></tr>
      <tr class="d"><td class="c">53</td><td>5,440</td><td>5,440</td><td>-</td><td>5,181</td><td>5,181</td><td>-</td></tr>
      <tr class="d"><td rowspan="3" class="c">화성동탄2</td><td class="c">59</td><td>14,666</td><td>14,666</td><td>-</td><td>-</td><td>-</td><td>-</td></tr>
      <tr class="d"><td class="c">74</td><td>18,395</td><td>18,395</td><td>-</td><td>-</td><td>-</td><td>-</td></tr>
      <tr class="d"><td class="c">84</td><td>18,395</td><td>21,248</td><td>-</td><td>-</td><td>-</td><td>-</td></tr>
      <tr class="d"><td rowspan="2" class="c">김포한강</td><td class="c">69</td><td>7,056</td><td>7,408</td><td>352</td><td>6,720</td><td>7,056</td><td>336</td></tr>
      <tr class="d"><td class="c">84</td><td>9,240</td><td>9,702</td><td>462</td><td>8,800</td><td>9,240</td><td>440</td></tr>
      <tr class="d"><td class="c">남양주별내</td><td class="c">84</td><td colspan="6" class="c" style="font-weight:bold">10년 임대후 분양주택(현 입주자 퇴거시 별도 모집공고 예정)</td></tr>
      <tr class="d"><td class="c"></td><td class="c"></td><td class="c">59</td><td>9,198</td><td>9,657</td><td>459</td><td>8,760</td><td>9,198</td><td>438</td></tr>
    </table>
    <div style="position:absolute;left:5px;top:5px;width:358px;height:22px;border:2px solid #217346"></div>
  </div>
  <div class="vs"><span class="t g" style="left:2px;top:3px;font-size:5px">▲</span><div style="position:absolute;left:2px;top:10px;width:4px;height:26px;border-radius:2px;background:#8a8a8a"></div><span class="t g" style="left:2px;top:352px;font-size:5px">▼</span></div>

  <div class="tabs">
    <span class="t" style="left:13px;top:4px;color:#bbb;font-size:6px">‹</span><span class="t" style="left:26px;top:4px;color:#bbb;font-size:6px">›</span>
    <div style="position:absolute;left:45px;top:3px;width:1px;height:9px;background:#ccc"></div>
    <span class="t" style="left:51px;top:4px;color:#444;font-size:6.8px">임대보증금등 조정내역 1</span>
    <div style="position:absolute;left:126px;top:0;width:82px;height:15px;background:#fff;border:1.5px solid #f04848"></div>
    <span class="t" style="left:132px;top:4px;color:#1e7145;font-size:6.8px">임대보증금등 조정내역 2</span>
    <span class="t g" style="left:223px;top:2px;font-size:9px">⊕</span>
    <span class="t g" style="left:265px;top:3px">⋮</span>
    <span class="t" style="left:278px;top:4px;font-size:6px;color:#444">◀</span>
    <div style="position:absolute;left:285px;top:4px;width:140px;height:5px;border-radius:3px;background:#6f6f6f"></div>
    <span class="t" style="left:433px;top:4px;font-size:6px;color:#444">▶</span>
  </div>
  <div class="stat">
    <span class="t" style="left:3px;top:2px;font-size:6.5px">준비</span>
    <span class="t" style="left:24px;top:1px;font-size:6.5px">⚙ 접근성: 조사 필요</span>
    <span class="t" style="left:310px;top:1px;font-size:7px;color:#555">▦</span><span class="t" style="left:328px;top:1px;font-size:7px;color:#555">▤</span><span class="t" style="left:347px;top:1px;font-size:7px;color:#555">⊓</span>
    <span class="t" style="left:364px;top:1px;font-size:7px;color:#555">−</span>
    <div style="position:absolute;left:371px;top:5px;width:47px;height:1px;background:#888"></div>
    <div style="position:absolute;left:381px;top:2px;width:2px;height:7px;background:#444"></div>
    <span class="t" style="left:420px;top:1px;font-size:7px;color:#555">+</span>
    <span class="t" style="left:430px;top:2px;font-size:6.5px">50%</span>
  </div>
</div>

<!-- annotations -->
<svg style="position:absolute;left:0;top:0" width="900" height="488">
  <g>
    <path d="M134 454L124 470L140 461Z" fill="#e8453c" stroke="#fff" stroke-width="1"/>
    <circle cx="144" cy="450" r="10.5" fill="#e8453c" stroke="#fff" stroke-width="1.5"/>
    <text x="144" y="455" font-size="14" font-weight="bold" fill="#fff" text-anchor="middle" font-family="Liberation Sans">1</text>
    <path d="M667 454L657 470L673 461Z" fill="#e8453c" stroke="#fff" stroke-width="1"/>
    <circle cx="677" cy="450" r="10.5" fill="#e8453c" stroke="#fff" stroke-width="1.5"/>
    <text x="677" y="455" font-size="14" font-weight="bold" fill="#fff" text-anchor="middle" font-family="Liberation Sans">2</text>
  </g>
  <g>
    <path d="M868 411L896 426V470L868 486L840 470V426Z" fill="#2b2b2b" stroke="#fff" stroke-width="1.5"/>
    <path d="M840 426L868 441L896 426M868 441V486" fill="none" stroke="#fff" stroke-width="1"/>
    <path d="M868 411L896 426L868 441L840 426Z" fill="#f5f5f5"/>
    <text x="872" y="455" font-size="9" fill="#fff" font-family="Liberation Sans" font-style="italic" transform="rotate(-60 872 455)">Hash</text>
    <text x="880" y="473" font-size="9" fill="#fff" font-family="Liberation Sans" font-style="italic" transform="rotate(-60 880 473)">Tag</text>
  </g>
</svg>
</body></html>
